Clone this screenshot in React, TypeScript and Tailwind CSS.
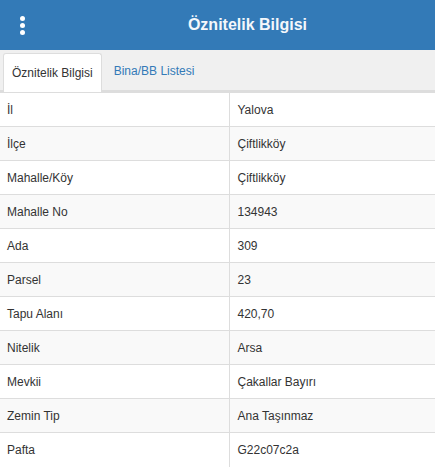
import React from "react";

const rows: [string, string][] = [
  ["İl", "Yalova"],
  ["İlçe", "Çiftlikköy"],
  ["Mahalle/Köy", "Çiftlikköy"],
  ["Mahalle No", "134943"],
  ["Ada", "309"],
  ["Parsel", "23"],
  ["Tapu Alanı", "420,70"],
  ["Nitelik", "Arsa"],
  ["Mevkii", "Çakallar Bayırı"],
  ["Zemin Tip", "Ana Taşınmaz"],
  ["Pafta", "G22c07c2a"],
];

export default function App() {
  return (
    <div className="w-[435px] h-[468px] overflow-hidden bg-white font-['Liberation_Sans',Arial,sans-serif] text-[12px] text-[#333]">
      {/* header */}
      <div className="flex h-[50px] items-center bg-[#337ab7]">
        <button className="flex h-full w-[60px] flex-col items-start justify-center gap-[2px] pl-[20px]">
          <span className="h-[5px] w-[5px] rounded-full bg-white" />
          <span className="h-[5px] w-[5px] rounded-full bg-white" />
          <span className="h-[5px] w-[5px] rounded-full bg-white" />
        </button>
        <h1 className="flex-1 text-center text-[16px] font-bold text-[#f4f7fb]">Öznitelik Bilgisi</h1>
      </div>

      {/* tabs */}
      <div className="flex h-[42px] items-end border-b-2 border-[#ddd] bg-[#f0f0f0] pl-[3px]">
        <div className="-mb-[2px] flex h-[39px] items-center rounded-t-[3px] border border-b-0 border-[#ddd] bg-white px-[8px]">
          Öznitelik Bilgisi
        </div>
        <div className="flex h-[39px] items-center px-[12px] text-[#337ab7]">Bina/BB Listesi</div>
      </div>

      {/* table */}
      <table className="w-full border-collapse">
        <tbody>
          {rows.map(([k, v], i) => (
            <tr key={k} className={i % 2 === 1 ? "bg-[#f9f9f9]" : "bg-white"}>
              <td className="h-[34px] w-[229px] border-t border-r border-[#ddd] px-[7px] align-middle">{k}</td>
              <td className="h-[34px] border-t border-[#ddd] px-[8px] align-middle">{v}</td>
            </tr>
          ))}
        </tbody>
      </table>
    </div>
  );
}
